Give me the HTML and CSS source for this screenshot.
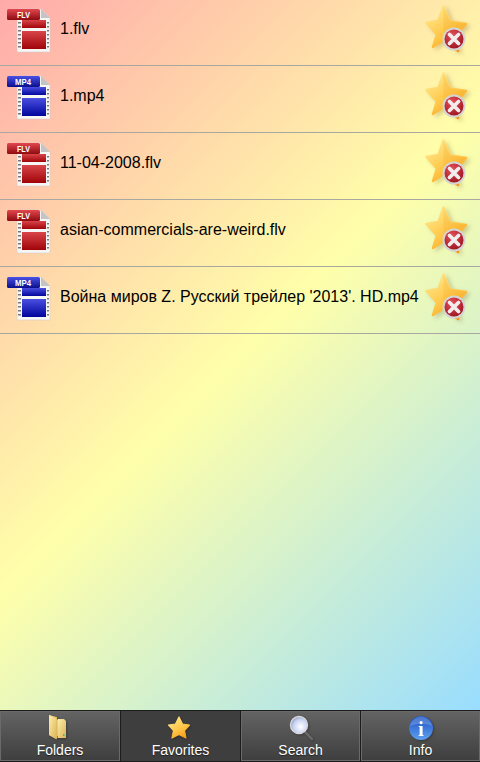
FILE: index.html
```html
<!DOCTYPE html>
<html lang="en">
<head>
    <meta charset="UTF-8">
    <meta name="viewport" content="width=device-width, initial-scale=1.0">
    <title>Favorites</title>
    <link rel="stylesheet" href="styles.css">
</head>
<body>
    <svg class="defs" width="0" height="0">
        <defs>
            <linearGradient id="red-film" x1="0" y1="0" x2="0" y2="1">
                <stop offset="0" stop-color="#d8454a"/>
                <stop offset="1" stop-color="#a00408"/>
            </linearGradient>
            <linearGradient id="red-tag" x1="0" y1="0" x2="0" y2="1">
                <stop offset="0" stop-color="#e2474f"/>
                <stop offset="1" stop-color="#8e0a10"/>
            </linearGradient>
            <linearGradient id="blue-film" x1="0" y1="0" x2="0" y2="1">
                <stop offset="0" stop-color="#4a4fe0"/>
                <stop offset="1" stop-color="#00069c"/>
            </linearGradient>
            <linearGradient id="blue-tag" x1="0" y1="0" x2="0" y2="1">
                <stop offset="0" stop-color="#4a50e6"/>
                <stop offset="1" stop-color="#0a0f8c"/>
            </linearGradient>
            <linearGradient id="star-fill" x1="0.2" y1="0" x2="0.8" y2="1">
                <stop offset="0" stop-color="#ffe98e"/>
                <stop offset="0.55" stop-color="#ffc647"/>
                <stop offset="1" stop-color="#f59a18"/>
            </linearGradient>
            <radialGradient id="badge-fill" cx="0.4" cy="0.3" r="0.8">
                <stop offset="0" stop-color="#e8505a"/>
                <stop offset="1" stop-color="#96101c"/>
            </radialGradient>
            <linearGradient id="folder-fill" x1="0" y1="0" x2="1" y2="1">
                <stop offset="0" stop-color="#fdeeaa"/>
                <stop offset="1" stop-color="#dcb458"/>
            </linearGradient>
            <radialGradient id="lens-fill" cx="0.6" cy="0.6" r="0.6">
                <stop offset="0" stop-color="#ffffff"/>
                <stop offset="0.7" stop-color="#c8d4f4"/>
                <stop offset="1" stop-color="#9aa6c8"/>
            </radialGradient>
            <linearGradient id="info-fill" x1="0" y1="0" x2="0" y2="1">
                <stop offset="0" stop-color="#1c50c0"/>
                <stop offset="1" stop-color="#5ea0f0"/>
            </linearGradient>

            <symbol id="film" viewBox="0 0 44 46">
                <path d="M10 2H34L43 11V45H10Z" fill="#f6f6f4" stroke="#c8c8c8" stroke-width="0.5"/>
                <path d="M34 2V11H43Z" fill="#c4c4c4"/>
                <path d="M11 15h3v1.500h-3zM11 19h3v1.500h-3zM11 23h3v1.500h-3zM11 27h3v1.500h-3zM11 31h3v1.500h-3zM11 35h3v1.500h-3zM11 39h3v1.500h-3zM40 15h2v1.500h-2zM40 19h2v1.500h-2zM40 23h2v1.500h-2zM40 27h2v1.500h-2zM40 31h2v1.500h-2zM40 35h2v1.500h-2zM40 39h2v1.500h-2z" fill="#77777a"/>
            </symbol>
            <symbol id="star" viewBox="0 0 44 48">
                <path d="M18.500 1.500L25 16.500L41 19L30 31.500L33 46L18.500 35L8 42L12 29.500L1.500 18L13.500 16Z" fill="url(#star-fill)" stroke="url(#star-fill)" stroke-width="2.500" stroke-linejoin="round"/>
                <path d="M18.500 1.500L25 16.500L41 19L30 31.500L33 46L18.500 28Z" fill="#f09a1a" opacity="0.18"/>
            </symbol>
            <symbol id="badge" viewBox="0 0 24 24">
                <circle cx="12" cy="12" r="11.500" fill="#d4d4d4"/>
                <circle cx="12" cy="12" r="9.500" fill="url(#badge-fill)"/>
                <path d="M7.500 7.500L16.500 16.500M16.500 7.500L7.500 16.500" stroke="#f2ecec" stroke-width="3.800" stroke-linecap="round"/>
            </symbol>
        </defs>
    </svg>

    <main class="content">
        <ul class="file-list">
            <li class="file-row">
                <svg class="file-icon" viewBox="0 0 44 46">
                    <use href="#film"/>
                    <rect x="15" y="13" width="24" height="8" fill="url(#red-film)"/>
                    <rect x="15" y="24" width="24" height="18" fill="url(#red-film)"/>
                    <rect x="0" y="2" width="33" height="11" rx="1.500" fill="url(#red-tag)"/>
                    <text x="10" y="10.500" class="tag-label" textLength="13" lengthAdjust="spacingAndGlyphs">FLV</text>
                </svg>
                <span class="file-name">1.flv</span>
                <span class="fav-remove">
                    <svg class="star-icon"><use href="#star"/></svg>
                    <svg class="badge-icon"><use href="#badge"/></svg>
                </span>
            </li>
            <li class="file-row">
                <svg class="file-icon" viewBox="0 0 44 46">
                    <use href="#film"/>
                    <rect x="15" y="13" width="24" height="8" fill="url(#blue-film)"/>
                    <rect x="15" y="24" width="24" height="18" fill="url(#blue-film)"/>
                    <rect x="0" y="2" width="33" height="11" rx="1.500" fill="url(#blue-tag)"/>
                    <text x="8" y="10.500" class="tag-label" textLength="16" lengthAdjust="spacingAndGlyphs">MP4</text>
                </svg>
                <span class="file-name">1.mp4</span>
                <span class="fav-remove">
                    <svg class="star-icon"><use href="#star"/></svg>
                    <svg class="badge-icon"><use href="#badge"/></svg>
                </span>
            </li>
            <li class="file-row">
                <svg class="file-icon" viewBox="0 0 44 46">
                    <use href="#film"/>
                    <rect x="15" y="13" width="24" height="8" fill="url(#red-film)"/>
                    <rect x="15" y="24" width="24" height="18" fill="url(#red-film)"/>
                    <rect x="0" y="2" width="33" height="11" rx="1.500" fill="url(#red-tag)"/>
                    <text x="10" y="10.500" class="tag-label" textLength="13" lengthAdjust="spacingAndGlyphs">FLV</text>
                </svg>
                <span class="file-name">11-04-2008.flv</span>
                <span class="fav-remove">
                    <svg class="star-icon"><use href="#star"/></svg>
                    <svg class="badge-icon"><use href="#badge"/></svg>
                </span>
            </li>
            <li class="file-row">
                <svg class="file-icon" viewBox="0 0 44 46">
                    <use href="#film"/>
                    <rect x="15" y="13" width="24" height="8" fill="url(#red-film)"/>
                    <rect x="15" y="24" width="24" height="18" fill="url(#red-film)"/>
                    <rect x="0" y="2" width="33" height="11" rx="1.500" fill="url(#red-tag)"/>
                    <text x="10" y="10.500" class="tag-label" textLength="13" lengthAdjust="spacingAndGlyphs">FLV</text>
                </svg>
                <span class="file-name">asian-commercials-are-weird.flv</span>
                <span class="fav-remove">
                    <svg class="star-icon"><use href="#star"/></svg>
                    <svg class="badge-icon"><use href="#badge"/></svg>
                </span>
            </li>
            <li class="file-row">
                <svg class="file-icon" viewBox="0 0 44 46">
                    <use href="#film"/>
                    <rect x="15" y="13" width="24" height="8" fill="url(#blue-film)"/>
                    <rect x="15" y="24" width="24" height="18" fill="url(#blue-film)"/>
                    <rect x="0" y="2" width="33" height="11" rx="1.500" fill="url(#blue-tag)"/>
                    <text x="8" y="10.500" class="tag-label" textLength="16" lengthAdjust="spacingAndGlyphs">MP4</text>
                </svg>
                <span class="file-name">Война миров Z. Русский трейлер '2013'. HD.mp4</span>
                <span class="fav-remove">
                    <svg class="star-icon"><use href="#star"/></svg>
                    <svg class="badge-icon"><use href="#badge"/></svg>
                </span>
            </li>
        </ul>
    </main>

    <nav class="tab-bar">
        <div class="tab">
            <svg class="tab-icon" viewBox="0 0 26 26">
                <path d="M2 0L10 2V5H18V21L10 21V24L2 20Z" fill="#d8b458"/>
                <path d="M2 0L9.500 3V24.500L2 20Z" fill="url(#folder-fill)"/>
                <path d="M10.500 4H17L19 6V23H10.500Z" fill="url(#folder-fill)"/>
                <rect x="16" y="19" width="1.500" height="2" fill="#3fc47a"/>
            </svg>
            <span class="tab-label">Folders</span>
        </div>
        <div class="tab tab-active">
            <svg class="tab-icon" viewBox="0 0 26 26">
                <path d="M11 2L14.500 9L21.500 10L16.500 15.500L18 23L11 19.500L4 23L5.500 15.500L0.500 10L7.500 9Z" fill="url(#star-fill)" stroke="url(#star-fill)" stroke-width="1.200" stroke-linejoin="round"/>
            </svg>
            <span class="tab-label">Favorites</span>
        </div>
        <div class="tab">
            <svg class="tab-icon" viewBox="0 0 26 26">
                <path d="M17 17L24 24" stroke="#6b6b6b" stroke-width="2.400" stroke-linecap="round"/>
                <circle cx="11" cy="10" r="8.500" fill="url(#lens-fill)" stroke="#d8d8dc" stroke-width="1.400"/>
            </svg>
            <span class="tab-label">Search</span>
        </div>
        <div class="tab">
            <svg class="tab-icon" viewBox="0 0 26 26">
                <circle cx="13" cy="13" r="12" fill="url(#info-fill)"/>
                <path d="M2 11C4 4 9 1.500 13 1.500S22 4 24 11C18 8 8 8 2 11Z" fill="#ffffff" opacity="0.2"/>
                <text x="13" y="20.500" class="info-mark">i</text>
            </svg>
            <span class="tab-label">Info</span>
        </div>
    </nav>
</body>
</html>
```

FILE: styles.css
```css
* {
    margin: 0;
    padding: 0;
    box-sizing: border-box;
}

html, body {
    height: 100%;
}

body {
    display: flex;
    flex-direction: column;
    overflow: hidden;
    font-family: "Liberation Sans", Arial, sans-serif;
    color: #000;
}

.defs {
    position: absolute;
}

.content {
    flex: 1;
    background: linear-gradient(135deg, #ffaaaa 0%, #ffffaa 50%, #99ddff 100%);
}

.file-list {
    list-style: none;
    margin-top: -1px;
}

.file-row {
    display: flex;
    align-items: flex-start;
    height: 67px;
    padding: 8px 11px 0 7px;
    border-bottom: 1px solid #a8a8a0;
}

.file-icon {
    flex: none;
    width: 44px;
    height: 46px;
    margin-right: 9px;
}

.tag-label {
    font: bold 9px "Liberation Sans", Arial, sans-serif;
    fill: #fff;
}

.file-name {
    flex: 1;
    font-size: 16px;
    line-height: 20px;
    margin-top: 12px;
    white-space: nowrap;
}

.fav-remove {
    position: relative;
    flex: none;
    width: 44px;
    height: 48px;
    margin-top: -2px;
}

.star-icon {
    display: block;
    width: 44px;
    height: 48px;
    filter: drop-shadow(3px 2px 2px rgba(80, 60, 20, 0.22));
}

.badge-icon {
    position: absolute;
    left: 17px;
    top: 22px;
    width: 24px;
    height: 24px;
}

.tab-bar {
    flex: none;
    display: grid;
    grid-template-columns: repeat(4, 1fr);
    height: 52px;
    background: #1c1c1c;
    padding-top: 1px;
}

.tab {
    display: flex;
    flex-direction: column;
    align-items: center;
    height: 50px;
    padding-top: 4px;
    border-left: 1px solid #1c1c1c;
    box-shadow: inset 0 0 0 1px #6a6a6a;
    background: linear-gradient(#646464, #3e3e3e);
}

.tab:first-child {
    border-left: 0;
}

.tab-active {
    background: #3e3e3e;
    box-shadow: none;
}

.tab-icon {
    width: 26px;
    height: 26px;
    filter: drop-shadow(1px 1px 1px rgba(0, 0, 0, 0.3));
}

.info-mark {
    font: bold 20px "Liberation Serif", serif;
    fill: #fff;
    text-anchor: middle;
}

.tab-label {
    font-size: 14px;
    line-height: 16px;
    margin-top: 1px;
    color: #fff;
    text-shadow: 0 1px 1px rgba(0, 0, 0, 0.5);
}
```
